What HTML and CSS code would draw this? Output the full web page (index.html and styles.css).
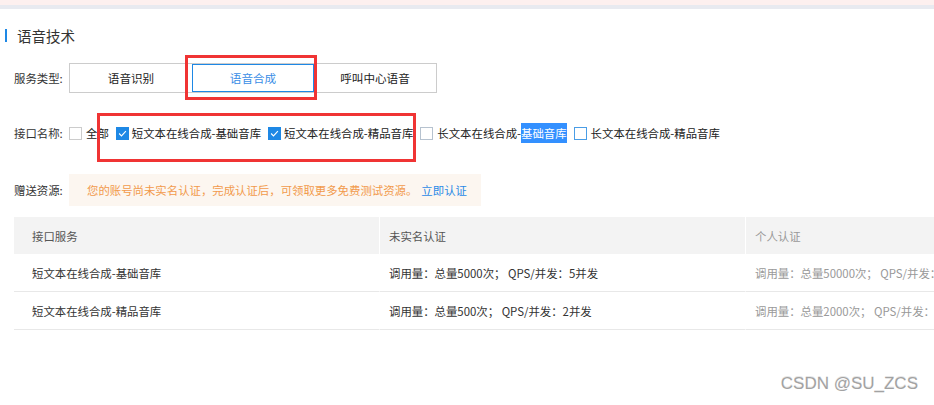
FILE: index.html
```html
<!DOCTYPE html>
<html lang="zh-CN">
<head>
    <meta charset="UTF-8">
    <title>语音技术</title>
    <link rel="stylesheet" href="styles.css">
</head>
<body>
    <div class="top-strip"></div>

    <div class="panel">
        <h2 class="section-title">语音技术</h2>

        <div class="form-row row-service">
            <span class="form-label">服务类型:</span>
            <div class="seg-group">
                <button class="seg-btn">语音识别</button>
                <button class="seg-btn active">语音合成</button>
                <button class="seg-btn">呼叫中心语音</button>
            </div>
        </div>

        <div class="form-row row-api">
            <span class="form-label">接口名称:</span>
            <label class="check"><span class="box"></span>全部</label>
            <label class="check checked">
                <span class="box"><svg viewBox="0 0 13 13"><polyline points="2.5,6.5 5.3,9.3 10.5,3.6"/></svg></span>短文本在线合成-基础音库
            </label>
            <label class="check checked">
                <span class="box"><svg viewBox="0 0 13 13"><polyline points="2.5,6.5 5.3,9.3 10.5,3.6"/></svg></span>短文本在线合成-精品音库
            </label>
            <label class="check muted"><span class="box"></span>长文本在线合成-<span class="selected-text">基础音库</span></label>
            <label class="check hover"><span class="box"></span>长文本在线合成-精品音库</label>
        </div>

        <div class="form-row row-gift">
            <span class="form-label">赠送资源:</span>
            <div class="notice">
                您的账号尚未实名认证，完成认证后，可领取更多免费测试资源。<a class="notice-link">立即认证</a>
            </div>
        </div>

        <table class="quota-table">
            <thead>
                <tr>
                    <th class="col-name">接口服务</th>
                    <th>未实名认证</th>
                    <th class="dim">个人认证</th>
                </tr>
            </thead>
            <tbody>
                <tr>
                    <td class="col-name">短文本在线合成-基础音库</td>
                    <td>调用量：总量5000次； QPS/并发：5并发</td>
                    <td class="dim">调用量：总量50000次； QPS/并发：</td>
                </tr>
                <tr>
                    <td class="col-name">短文本在线合成-精品音库</td>
                    <td>调用量：总量500次； QPS/并发：2并发</td>
                    <td class="dim">调用量：总量2000次； QPS/并发：</td>
                </tr>
            </tbody>
        </table>
    </div>

    <!-- annotation boxes from the screenshot -->
    <div class="mark mark-service"></div>
    <div class="mark mark-api"></div>

    <div class="watermark">CSDN @SU_ZCS</div>
</body>
</html>
```

FILE: styles.css
```css
body {
    margin: 0;
    padding: 0;
    background-color: #fff;
    color: #333;
    font-family: "Noto Sans CJK SC", "Microsoft YaHei", sans-serif;
    font-size: 11.4px;
    overflow: hidden;
    position: relative;
    height: 405px;
}

.top-strip {
    height: 5px;
    background-color: #fdf0ef;
    border-bottom: 4px solid #e8eaf0;
}

.panel {
    padding-left: 14px;
}

.section-title {
    margin: 20px 0 0 -9px;
    padding-left: 10px;
    border-left: 2px solid #1e88e5;
    font-size: 14.5px;
    font-weight: normal;
    line-height: 13px;
    height: 13px;
    color: #333;
    display: flex;
    align-items: center;
}

.form-row {
    display: flex;
    align-items: center;
}

.form-label {
    width: 55px;
    flex-shrink: 0;
    color: #333;
    line-height: 20px;
}

.row-service {
    margin-top: 21px;
}

.seg-group {
    display: flex;
    border: 1px solid #ccc;
}

.seg-btn {
    width: 122px;
    height: 28px;
    border: 1px solid transparent;
    background: #fff;
    font-family: inherit;
    font-size: 11.6px;
    color: #222;
    padding: 0;
    cursor: pointer;
}

.seg-btn.active {
    border-color: #1e88e5;
    color: #3a8ee6;
}

.row-api {
    margin-top: 30px;
    height: 20px;
}

.check {
    display: flex;
    align-items: center;
    margin-right: 7px;
    color: #222;
    line-height: 20px;
    white-space: nowrap;
}

.check .box {
    width: 11px;
    height: 11px;
    border: 1px solid #ccc;
    background: #fff;
    margin-right: 4px;
    display: flex;
}

.check.checked .box {
    margin-right: 3px;
    border-color: #1e88e5;
    background: #1e88e5;
}

.check .box svg {
    width: 11px;
    height: 11px;
    fill: none;
    stroke: #fff;
    stroke-width: 1.3;
}

.check.muted .box {
    border-color: #b6c2cf;
}

.check.hover .box {
    border-color: #4a9de6;
}

.selected-text {
    background-color: #3390ff;
    color: #fff;
}

.row-gift {
    margin-top: 31px;
}

.notice {
    width: 394px;
    height: 32px;
    padding-left: 18px;
    background-color: #fcf6f0;
    color: #f29a4c;
    display: flex;
    align-items: center;
    white-space: nowrap;
}

.notice-link {
    color: #2b8ae6;
    margin-left: 4px;
    cursor: pointer;
}

.quota-table {
    margin-top: 11px;
    border-collapse: separate;
    border-spacing: 0;
    table-layout: fixed;
    width: 1098px;
}

.quota-table th,
.quota-table td {
    width: 356px;
    padding: 0 0 0 9px;
    text-align: left;
    font-weight: normal;
    border-right: 1px solid #fff;
    white-space: nowrap;
    overflow: hidden;
}

.quota-table th {
    height: 37px;
    background-color: #f3f3f3;
    color: #555;
}

.quota-table td {
    height: 37px;
    border-bottom: 1px solid #e8e8e8;
    color: #333;
}

.quota-table .col-name {
    padding-left: 18px;
    width: 347px;
}

.quota-table .dim {
    color: #999;
}

.mark {
    position: absolute;
    border: 3px solid #f03434;
}

.mark-service {
    left: 185px;
    top: 55px;
    width: 126px;
    height: 39px;
}

.mark-api {
    left: 97px;
    top: 113px;
    width: 313px;
    height: 43px;
}

.watermark {
    position: absolute;
    right: 16px;
    top: 374px;
    font-family: "Liberation Sans", Arial, sans-serif;
    font-size: 17px;
    color: #a2a2a2;
    text-shadow: 0 1px 0 #fff, 0 -1px 0 #e6e6e6;
}
```
